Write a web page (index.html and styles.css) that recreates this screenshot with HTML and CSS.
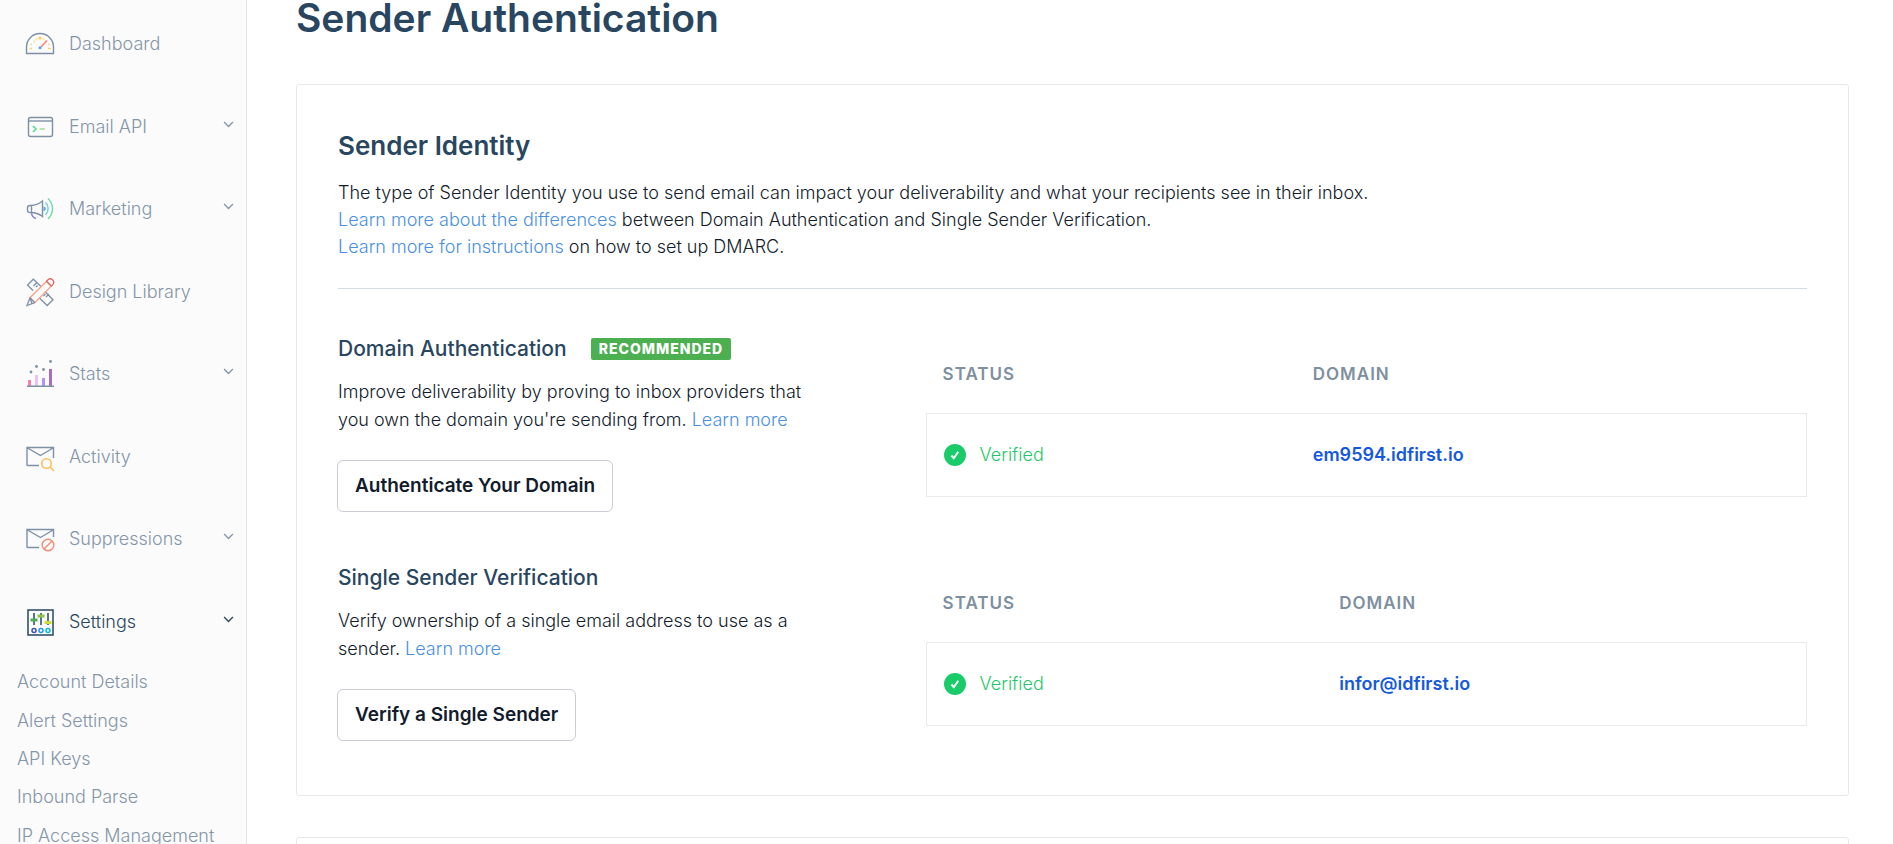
FILE: index.html
```html
<!DOCTYPE html>
<html lang="en">
<head>
<meta charset="utf-8">
<title>Sender Authentication</title>
<link rel="stylesheet" href="styles.css">
</head>
<body>
<div class="app">
  <aside class="sidebar">
    <nav aria-label="Main">
      <ul class="nav">
        <li><a class="nav-link" href="#">
          <svg class="nav-icon" viewBox="0 0 30 30" fill="none" stroke="#7d90a5" stroke-width="1.4">
            <path d="M1.500 24.500V18a13.500 13.500 0 0 1 27 0v6.500z"/>
            <path stroke="#fbd56e" d="M4.500 19.500h2.500M23 19.500h3M5.500 15l1.500.8M24.500 15l-1.500.8M8.500 12l1.200 1M21.500 12l-1 .8M11 9.500l.6 1.200M19 9.500l-.6 1.200"/>
            <circle cx="15" cy="9" r=".9" fill="#ffc94d" stroke="#ffc94d"/>
            <path stroke="#ff8b78" stroke-width="1.800" d="M16 18l6-6.500"/>
            <circle cx="15" cy="18.800" r="1.500" fill="#56a4f5" stroke="none"/>
          </svg><span class="nav-label">Dashboard</span></a></li>
        <li><a class="nav-link" href="#">
          <svg class="nav-icon" viewBox="0 0 30 30" fill="none" stroke="#7d90a5" stroke-width="1.4">
            <rect x="3.500" y="5.500" width="24" height="19" rx="2"/><path d="M3.500 9h24"/>
            <path stroke="#5cdb95" stroke-width="1.700" d="M8 14l3 3-3 3"/><path stroke="#a5d987" d="M14.500 17h5.500"/>
          </svg><span class="nav-label">Email API</span>
          <svg class="chevron" viewBox="0 0 10 6"><path d="M1 .8l4 4 4-4"/></svg></a></li>
        <li><a class="nav-link" href="#">
          <svg class="nav-icon" viewBox="0 0 30 30" fill="none" stroke="#7d90a5" stroke-width="1.4">
            <path d="M17.500 7v15.500C13.500 19.500 10 18.500 6 18.500H5q-2.500 0-2.500-2.500v-2q0-2.500 2.500-2.500h1c4 0 7.500-1.500 11.500-4.500zM6.500 11.500v7"/>
            <path stroke="#8c87cf" d="M6.500 18.500c0 3 1.500 5 4.500 6"/>
            <path fill="#56a4f5" stroke="none" d="M18.500 12.500a2.200 2.200 0 0 1 0 4.500z"/>
            <path stroke="#69cbe5" d="M20.500 8.500c3.500 3.500 3.500 9 0 12.500"/><path stroke="#6fdda1" d="M23 4.500c6 6 6 14.500 0 20.500"/>
          </svg><span class="nav-label">Marketing</span>
          <svg class="chevron" viewBox="0 0 10 6"><path d="M1 .8l4 4 4-4"/></svg></a></li>
        <li><a class="nav-link" href="#">
          <svg class="nav-icon" viewBox="0 0 30 30" fill="none" stroke="#7d90a5" stroke-width="1.3">
            <path d="M8 13.500L2.500 8l5.800-5.800 7.500 7M20 14.500l8 8.200-5.800 5.800-7.800-7.500M8.500 9l3-3M11 10l1.500-1.500M21 20l3-3M18.500 19l2-2"/>
            <path stroke="#ff9c7d" d="M5 20.800L21.500 4.300l4.800 4.800L9.800 25.600z"/>
            <path stroke="#e06767" d="M21.500 4.300l1.500-1.500a3.400 3.400 0 0 1 4.800 4.800l-1.500 1.500z"/>
            <path d="M5 20.800L2 28.500l7.800-2.900M5 20.800l4.800 4.800M5 20.800l1.800 5.500"/>
          </svg><span class="nav-label">Design Library</span></a></li>
        <li><a class="nav-link" href="#">
          <svg class="nav-icon" viewBox="0 0 30 30">
            <path fill="#ff7fab" d="M3 21h3v6H3z"/><path fill="#ecc3ed" d="M10 16h3v11h-3z"/><path fill="#ae93ff" d="M17 19h3v8h-3z"/><path fill="#a96bc4" d="M24 10h3v17h-3z"/>
            <path fill="#7d90a5" d="M2 26.500h27V28H2z"/><g fill="#7d90a5"><circle cx="6" cy="13" r="1.400"/><circle cx="11.500" cy="7.500" r="1.400"/><circle cx="18.500" cy="10.500" r="1.400"/><circle cx="25.500" cy="2.500" r="1.400"/></g>
          </svg><span class="nav-label">Stats</span>
          <svg class="chevron" viewBox="0 0 10 6"><path d="M1 .8l4 4 4-4"/></svg></a></li>
        <li><a class="nav-link" href="#">
          <svg class="nav-icon" viewBox="0 0 30 30" fill="none" stroke="#7d90a5" stroke-width="1.400">
            <path d="M14 23.500H2.800q-.8 0-.8-.8V5.500h26.500V16M2.500 6l13 7.500L28 6"/>
            <circle cx="21.500" cy="21.500" r="4.800" stroke="#fdbf5e" stroke-width="1.600"/><path stroke="#fdbf5e" stroke-width="1.600" d="M25 25l4 3.800"/>
          </svg><span class="nav-label">Activity</span></a></li>
        <li><a class="nav-link" href="#">
          <svg class="nav-icon" viewBox="0 0 30 30" fill="none" stroke="#7d90a5" stroke-width="1.400">
            <path d="M14 23.500H2.800q-.8 0-.8-.8V5.500h26.500V13M2.500 6l13 7.500L28 6"/>
            <circle cx="23" cy="21" r="5.800" stroke="#f28b74"/><path stroke="#f28b74" d="M19 25l8-8"/>
          </svg><span class="nav-label">Suppressions</span>
          <svg class="chevron" viewBox="0 0 10 6"><path d="M1 .8l4 4 4-4"/></svg></a></li>
        <li><a class="nav-link current" href="#" aria-current="page">
          <svg class="nav-icon" viewBox="0 0 30 30" fill="none" stroke="#294661" stroke-width="1.500">
            <rect x="3" y="3" width="25" height="25"/>
            <path d="M9 6v12M16 6v12M23 6v12"/>
            <path fill="#4caf50" stroke="none" d="M5.500 11.500h7v3h-7z"/><path fill="#8bc34a" stroke="none" d="M12.500 7.500h7v3h-7z"/><path fill="#cddc39" stroke="none" d="M19.500 14h7v3h-7z"/>
            <circle cx="9" cy="23.500" r="2" stroke="#3f51b5"/><circle cx="16" cy="23.500" r="2" stroke="#2196f3"/><circle cx="23" cy="23.500" r="2" stroke="#00bcd4"/>
          </svg><span class="nav-label">Settings</span>
          <svg class="chevron" viewBox="0 0 10 6"><path d="M1 .8l4 4 4-4"/></svg></a></li>
      </ul>
      <ul class="subnav">
        <li><a href="#">Account Details</a></li>
        <li><a href="#">Alert Settings</a></li>
        <li><a href="#">API Keys</a></li>
        <li><a href="#">Inbound Parse</a></li>
        <li><a href="#">IP Access Management</a></li>
      </ul>
    </nav>
  </aside>
  <main class="main">
    <h1>Sender Authentication</h1>
    <section class="card">
      <header class="card-head">
        <h2>Sender Identity</h2>
        <p>The type of Sender Identity you use to send email can impact your deliverability and what your recipients see in their inbox.<br>
        <a href="#">Learn more about the differences</a> between Domain Authentication and Single Sender Verification.<br>
        <a href="#">Learn more for instructions</a> on how to set up DMARC.</p>
      </header>
      <div class="row">
        <div class="info">
          <div class="info-head"><h3>Domain Authentication</h3><span class="badge">Recommended</span></div>
          <p>Improve deliverability by proving to inbox providers that you own the domain you're sending from. <a href="#">Learn more</a></p>
          <button class="btn" type="button">Authenticate Your Domain</button>
        </div>
        <table class="records">
          <colgroup><col class="col-status"><col></colgroup>
          <thead><tr><th scope="col">Status</th><th scope="col">Domain</th></tr></thead>
          <tbody><tr>
            <td><span class="status"><svg class="check" viewBox="0 0 22 22"><circle cx="11" cy="11" r="11"/><path d="M7.500 11.500l2.300 2.700 4.500-6.500"/></svg>Verified</span></td>
            <td><a class="record" href="#">em9594.idfirst.io</a></td>
          </tr></tbody>
        </table>
      </div>
      <div class="row">
        <div class="info">
          <div class="info-head"><h3>Single Sender Verification</h3></div>
          <p>Verify ownership of a single email address to use as a sender. <a href="#">Learn more</a></p>
          <button class="btn" type="button">Verify a Single Sender</button>
        </div>
        <table class="records">
          <colgroup><col class="col-status-wide"><col></colgroup>
          <thead><tr><th scope="col">Status</th><th scope="col">Domain</th></tr></thead>
          <tbody><tr>
            <td><span class="status"><svg class="check" viewBox="0 0 22 22"><circle cx="11" cy="11" r="11"/><path d="M7.500 11.500l2.300 2.700 4.500-6.500"/></svg>Verified</span></td>
            <td><a class="record" href="#">infor@idfirst.io</a></td>
          </tr></tbody>
        </table>
      </div>
    </section>
    <section class="card"></section>
  </main>
</div>
</body>
</html>
```
FILE: styles.css
```css
* { box-sizing: border-box; }
body {
  margin: 0;
  height: 100vh;
  overflow: hidden;
  background: #fff;
  color: #121c2d;
  font-family: Inter, "Liberation Sans", sans-serif;
  font-size: 18px;
  font-weight: 300;
  line-height: 28px;
}
h1, h2, h3, p, ul { margin: 0; padding: 0; }
ul { list-style: none; }
a { color: #4a90e2; text-decoration: none; }

.app { display: flex; height: 100%; }
.sidebar {
  flex: 0 0 247px;
  padding-top: 3px;
  background: #fbfbfb;
  border-right: 1px solid #e3e5e8;
  overflow: hidden;
}
.nav { display: grid; grid-auto-rows: 1fr; min-height: 660px; }
.nav-link {
  display: flex;
  align-items: center;
  height: 100%;
  padding: 0 12px 0 25px;
  color: #8496a9;
}
.nav-icon { width: 30px; height: 30px; margin-right: 14px; }
.nav-label { flex: 1; }
.chevron {
  width: 11px;
  height: 7px;
  margin-bottom: 5px;
  fill: none;
  stroke: currentColor;
  stroke-width: 1.2;
}
.current { color: #294661; }
.subnav { display: grid; grid-auto-rows: 1fr; min-height: 192px; padding-left: 17px; }
.subnav li { display: flex; align-items: center; }
.subnav a { color: #8496a9; }

.main { flex: 1; min-width: 0; padding: 0 44px 0 49px; }
.main p { font-weight: 350; }
.main p a { font-weight: 300; }
h1, h2, h3 { color: #294661; font-weight: 600; }
h1 { margin-top: -6px; margin-bottom: 42px; font-size: 39px; line-height: 48px; }
.card {
  margin-bottom: 41px;
  padding: 40px 41px 0;
  min-height: 100px;
  border: 1px solid #e6e9ec;
  border-radius: 3px;
}
.card-head { padding-bottom: 28px; border-bottom: 1px solid #d3dbe1; }
.card-head p { line-height: 27px; }
h2 { margin-bottom: 12px; font-size: 26px; line-height: 42px; }
.row {
  display: grid;
  grid-template-columns: 2fr 3fr;
  align-items: start;
  min-height: 229px;
  padding-top: 46px;
}
.row + .row { min-height: 277px; }
.info-head { display: flex; align-items: center; gap: 24px; margin-bottom: 15px; }
.info p { max-width: 490px; margin-bottom: 26px; }
h3 { font-size: 21px; font-weight: 500; line-height: 28px; }
.badge {
  padding: 0 8px;
  border-radius: 2px;
  background: #4caf50;
  color: #fff;
  font-size: 14px;
  font-weight: 800;
  letter-spacing: 1px;
  line-height: 22px;
  text-transform: uppercase;
}
.btn {
  margin-left: -1px;
  padding: 11px 17px;
  border: 1px solid #cacdd8;
  border-radius: 6px;
  background: #fff;
  color: #121c2d;
  font: 600 19px/28px Inter, "Liberation Sans", sans-serif;
}
.records { width: 100%; border-collapse: separate; border-spacing: 0; table-layout: fixed; text-align: left; }
.col-status { width: 42%; }
.col-status-wide { width: 45%; }
.records th {
  height: 78px;
  padding: 0 17px;
  color: #7e8fa0;
  font-size: 17px;
  font-weight: 600;
  letter-spacing: 1px;
  text-transform: uppercase;
}
.records td { height: 84px; padding: 0 17px; border: solid #e9eaec; border-width: 1px 0; }
.records td:first-child { border-left-width: 1px; }
.records td:last-child { border-right-width: 1px; }
.status { display: flex; align-items: center; gap: 14px; color: #1fc76a; }
.check { width: 22px; height: 22px; fill: #1acb6a; }
.check path { fill: none; stroke: #fff; stroke-width: 2; }
.record { color: #1558e0; font-weight: 600; }
```
